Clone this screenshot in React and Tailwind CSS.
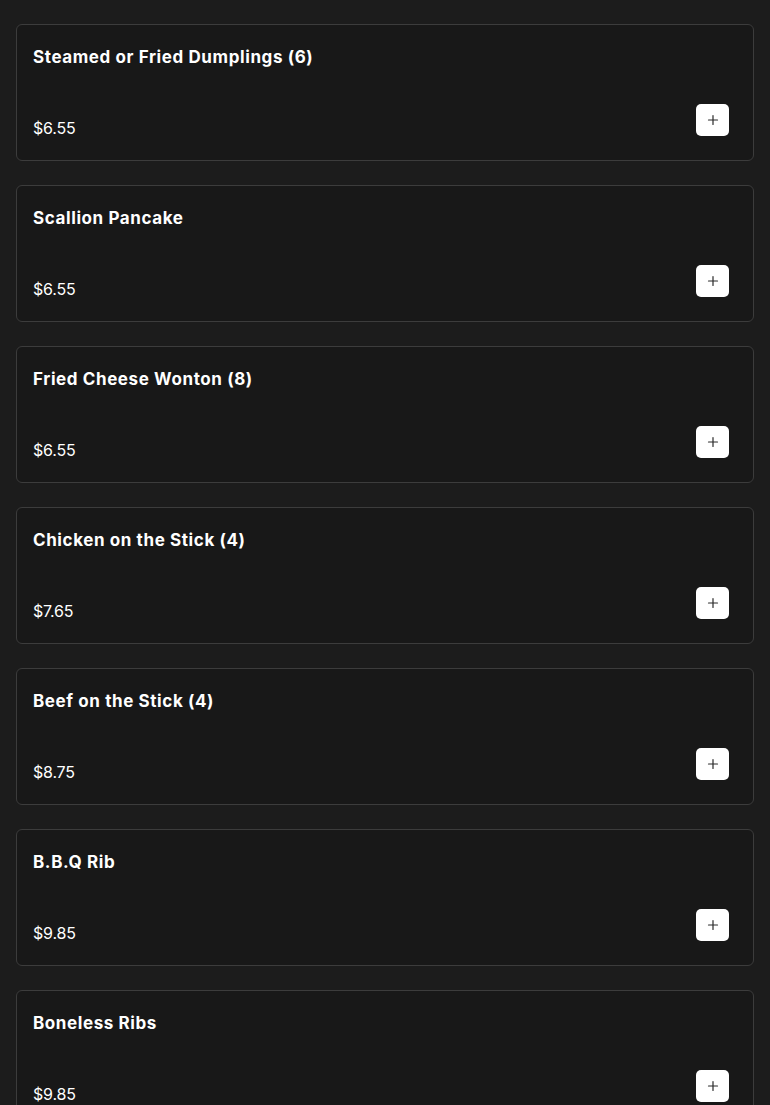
import React from "react";

const items = [
  ["Steamed or Fried Dumplings (6)", "$6.55"],
  ["Scallion Pancake", "$6.55"],
  ["Fried Cheese Wonton (8)", "$6.55"],
  ["Chicken on the Stick (4)", "$7.65"],
  ["Beef on the Stick (4)", "$8.75"],
  ["B.B.Q Rib", "$9.85"],
  ["Boneless Ribs", "$9.85"],
];

function PlusIcon() {
  return (
    <svg width="12" height="12" viewBox="0 0 12 12" fill="none">
      <path d="M6 1.5v9M1.5 6h9" stroke="#2a2a2a" strokeWidth="1.2" strokeLinecap="round" />
    </svg>
  );
}

export default function App() {
  return (
    <div
      className="min-h-[1105px] bg-[#1c1c1c] px-4 pt-6 flex flex-col gap-6"
      style={{ fontFamily: "Inter, 'Open Sans', sans-serif" }}
    >
      {items.map(([name, price]) => (
        <div
          key={name}
          className="border border-[#3c3c3c] rounded-md bg-[#181818] pt-[18px] px-4 pb-5 flex flex-col"
        >
          <div className="text-[17px] leading-7 font-bold text-white tracking-[0.6px]">{name}</div>
          <div className="mt-[33px] flex justify-between items-start">
            <div className="pt-[12px] text-[16px] leading-6 text-white tracking-[-0.2px]">{price}</div>
            <button className="w-[33px] h-[32px] rounded-[5px] bg-white flex items-center justify-center mr-[8px]">
              <PlusIcon />
            </button>
          </div>
        </div>
      ))}
    </div>
  );
}
